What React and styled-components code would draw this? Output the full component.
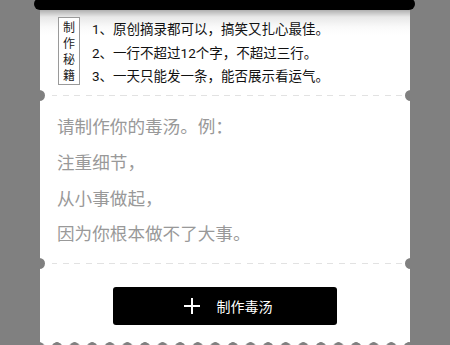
import React from 'react';
import styled, { createGlobalStyle } from 'styled-components';

const GlobalStyle = createGlobalStyle`
  html, body {
    margin: 0;
    padding: 0;
    background: #808080;
  }
  body {
    font-family: Roboto, "Noto Sans CJK SC", sans-serif;
  }
`;

const tips = [
  '1、原创摘录都可以，搞笑又扎心最佳。',
  '2、一行不超过12个字，不超过三行。',
  '3、一天只能发一条，能否展示看运气。',
];

const example = ['请制作你的毒汤。例：', '注重细节，', '从小事做起，', '因为你根本做不了大事。'];

const App = () => {
  return (
    <>
      <GlobalStyle />
      <StPage>
        <StSlot />
        <StCard>
          <StTips>
            <StBadge>
              {'制作秘籍'.split('').map((ch, i) => (
                <StBadgeChar key={i}>{ch}</StBadgeChar>
              ))}
            </StBadge>
            <StTipList>
              {tips.map((t, i) => (
                <li key={i}>{t}</li>
              ))}
            </StTipList>
          </StTips>
          <StDivider />
          <StInput>
            {example.map((line, i) => (
              <StPlaceholder key={i}>{line}</StPlaceholder>
            ))}
          </StInput>
          <StDivider />
          <StFooter>
            <StButton>
              <svg width="16" height="16" viewBox="0 0 16 16">
                <path d="M8 0v16M0 8h16" stroke="#fff" strokeWidth="2" fill="none" />
              </svg>
              <span>制作毒汤</span>
            </StButton>
          </StFooter>
        </StCard>
      </StPage>
    </>
  );
};

const StPage = styled.div`
  position: relative;
  height: 345px;
  overflow: hidden;
  padding: 0 40px;
`;

const StSlot = styled.div`
  position: absolute;
  z-index: 2;
  top: -2px;
  left: 34px;
  width: 381px;
  height: 12px;
  border-radius: 6px;
  background: #000;
`;

const StCard = styled.div`
  position: relative;
  margin-top: 9px;
  height: 341px;
  background: #fff;
  display: flex;
  flex-direction: column;

  &::after {
    content: '';
    position: absolute;
    left: 0;
    right: 0;
    bottom: 0;
    height: 8px;
    background: radial-gradient(circle at 50% 5.5px, #808080 5px, transparent 5.6px);
    background-size: 17.6px 8px;
    background-position: 8.2px 0;
  }
`;

const StTips = styled.div`
  height: 86px;
  box-sizing: border-box;
  padding: 8px 0 0 18px;
  display: flex;
  align-items: flex-start;
  gap: 12px;
  background: linear-gradient(#a8a8a8 0, #e8e8e8 8px, #fafafa 18px, #fff 26px);
`;

const StBadge = styled.div`
  width: 22px;
  height: 68px;
  box-sizing: border-box;
  border: 1px solid #9a9a9a;
  background: #fff;
  display: flex;
  flex-direction: column;
  align-items: center;
  justify-content: center;
  font-family: "Noto Sans CJK SC", sans-serif;
  font-size: 12px;
  color: #222;
`;

const StBadgeChar = styled.span`
  display: block;
  height: 16px;
  line-height: 16px;
`;

const StTipList = styled.ul`
  margin: 1px 0 0;
  padding: 0;
  list-style: none;
  font-size: 13.5px;
  line-height: 23.5px;
  color: #111;
`;

const StDivider = styled.div`
  position: relative;
  height: 1px;
  margin: 0;
  background: repeating-linear-gradient(to right, #e2e2e2 0 6px, transparent 6px 11.5px);
  background-clip: content-box;
  padding: 0 7px;

  &::before,
  &::after {
    content: '';
    position: absolute;
    top: -5px;
    width: 11px;
    height: 11px;
    border-radius: 50%;
    background: #808080;
  }
  &::before {
    left: -6px;
  }
  &::after {
    right: -6px;
  }
`;

const StInput = styled.div`
  height: 167px;
  box-sizing: border-box;
  padding: 14px 17px 0;
`;

const StPlaceholder = styled.div`
  font-size: 17.6px;
  line-height: 35.8px;
  color: #999;
`;

const StFooter = styled.div`
  padding-top: 23px;
  display: flex;
  justify-content: center;
`;

const StButton = styled.button`
  width: 224px;
  height: 38px;
  border: none;
  border-radius: 3px;
  background: #000;
  color: #fff;
  font-family: inherit;
  font-size: 14px;
  display: flex;
  align-items: center;
  justify-content: center;
  gap: 17px;
  padding: 0 0 0 6px;
  cursor: pointer;
`;

export default App;
